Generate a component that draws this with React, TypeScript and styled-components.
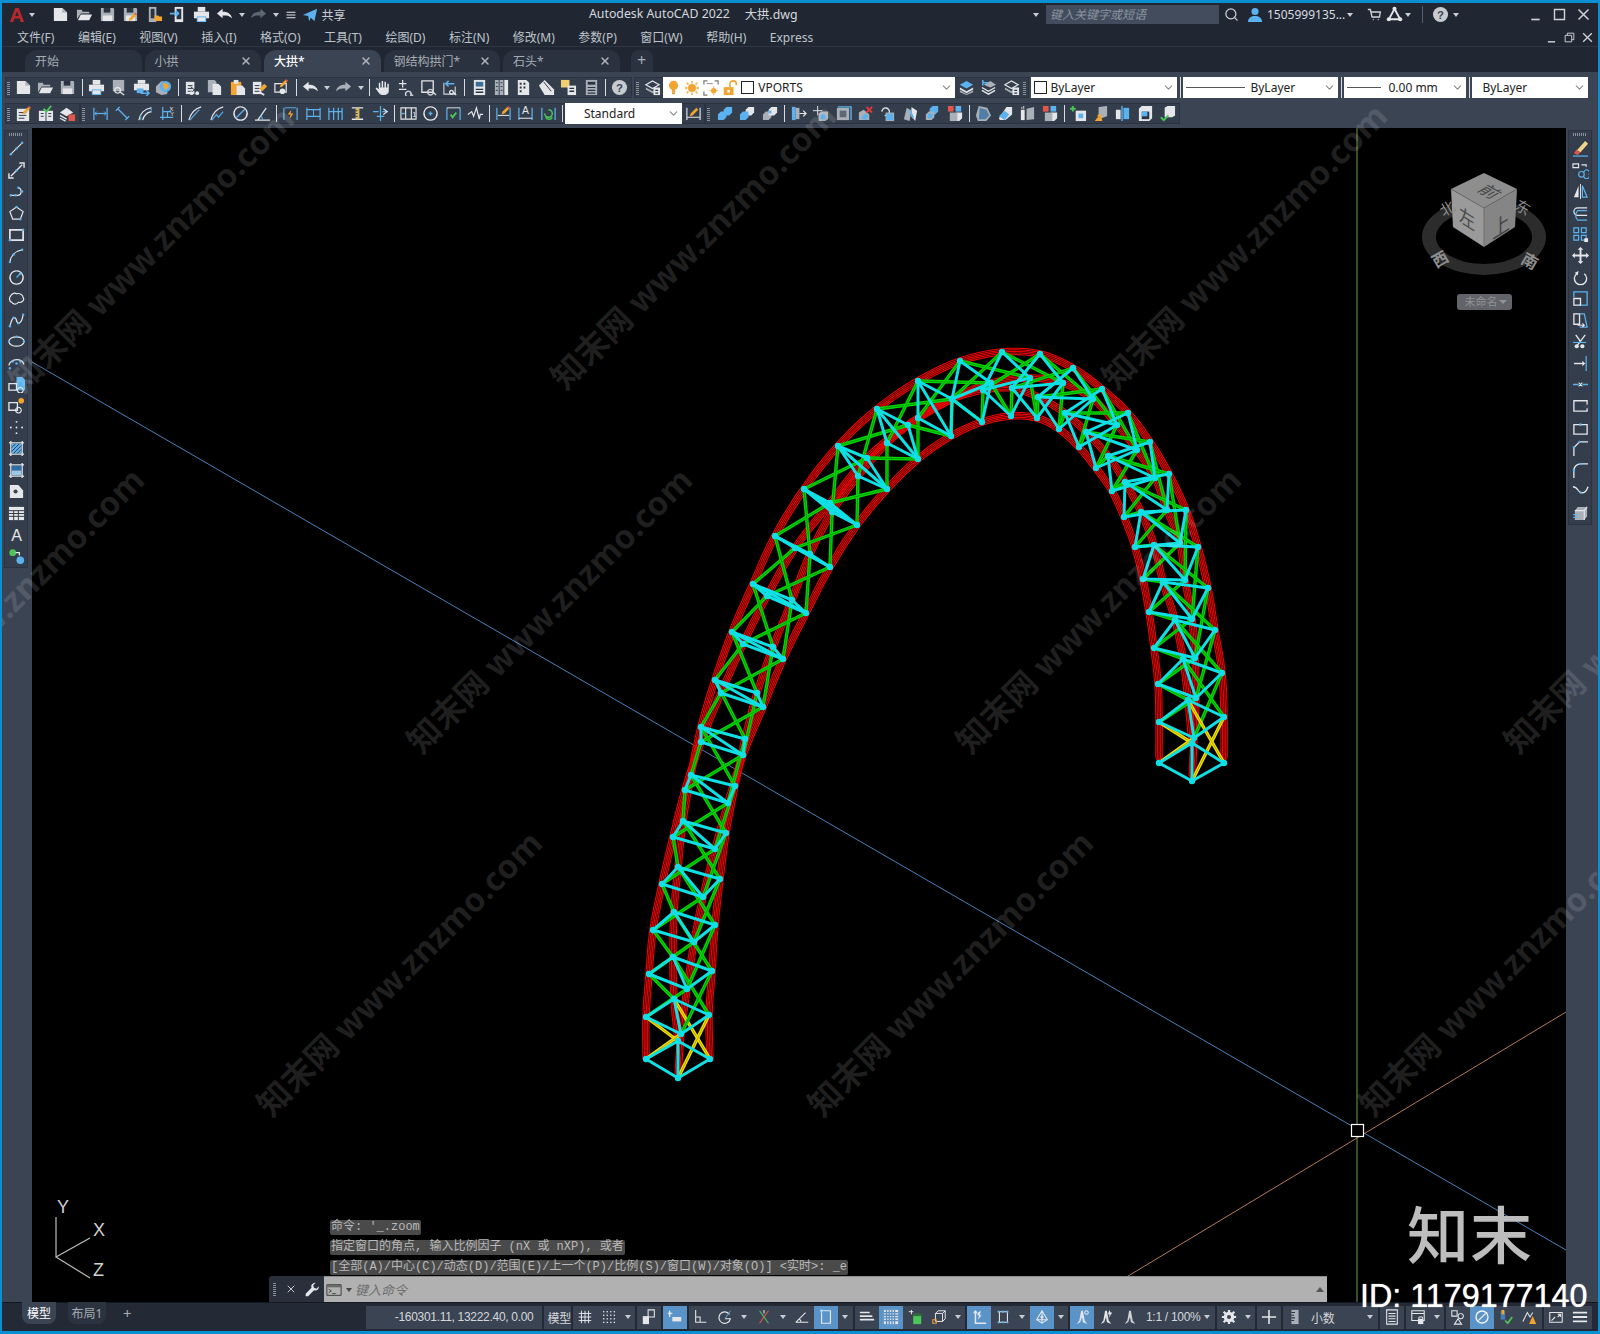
import React, { ReactNode } from 'react';
import styled, { createGlobalStyle } from 'styled-components';
import { ChevronDown, Search, X } from 'lucide-react';

const L = '#e4e6e9';
const M = '#aab0b8';
const B = '#5cb2ee';
const K = '#2b3340';
const O = '#f2a531';
const R = '#e2574c';
const G = '#4cc45a';
const S = '#cfd3d8';

const p = (d: string, c = L) => <path d={d} fill={c} />;
const s = (d: string, c = S, w = 1.3) => <path d={d} fill="none" stroke={c} strokeWidth={w} />;
const o = (x: number, y: number, c = B, r = 1.3) => <circle cx={x} cy={y} r={r} fill={c} />;
const hex = (x: number, y: number, c = B) => p(`M${x} ${y + 3}l3-3h6v6l-3 3h-6z`, c);
const pencil = (x: number, y: number) => <>{p(`M${x} ${y + 6}l5-5 2 2-5 5-3 1z`, O)}{p(`M${x + 5} ${y + 1}l1-1 2 2-1 1z`, R)}</>;
const floppy = <>{p('M2 2h13l1 1v13H2z', M)}{p('M5 2h7v5H5z', K)}{p('M4 10h10v6H4z', L)}</>;
const docs = <>{p('M2 3h9v13H2z', L)}{s('M4 7h5M4 10h5M4 13h5', K, 1)}</>;
const dimBar = s('M2 3v13M16 3v13', B, 1.3);

const glyphs: Record<string, ReactNode> = {
  logo: <>{p('M1 17L7 1h4l6 16h-4l-1-4H6l-1 4zM7 10h4L9 5z', '#b5282c')}</>,
  page: <>{p('M2 2h9l5 5v9H2z')}{p('M11 2l5 5h-5z', M)}</>,
  folder: <>{p('M1 14V4h5l1 2h7v2H5z', M)}{p('M5 9h12l-3 6H2z')}</>,
  save: floppy,
  saveas: <>{floppy}{pencil(8, 7)}</>,
  publish: <>{p('M3 1h8v16H3z', M)}{p('M5 3h4v10H5z', K)}{p('M9 10h4l1 1h3v5H9z', O)}</>,
  mobile: <>{p('M6 1h9v16H6z')}{p('M8 3h5v11H8z', K)}{s('M1 8h9M7 5l3 3-3 3', B, 1.8)}</>,
  print: <>{p('M5 1h8v5H5z')}{p('M1 6h16v7H1z')}{p('M4 11h10v6H4z', B)}{p('M5 12h8v4H5z')}</>,
  undo: <>{p('M1 8l6-5v3c5 0 9 2 10 7-3-3-6-3-10-3v3z')}</>,
  redo: <>{p('M17 8l-6-5v3C6 6 2 8 1 13c3-3 6-3 10-3v3z', M)}</>,
  redo2: <>{p('M17 8l-6-5v3C6 6 2 8 1 13c3-3 6-3 10-3v3z', '#5d6673')}</>,
  send: <>{p('M1 9L17 2l-3 14-4-4-2 4-1-6z', B)}</>,
  min: s('M4 15h10', S, 2),
  max: s('M3 3h12v12H3z', S, 1.7),
  close: s('M3 3l12 12M15 3L3 15', S, 1.8),
  restore: <>{s('M3 6h9v9H3zM6 6V3h9v9h-3', S, 1.3)}</>,
  user: <>{o(9, 5, B, 4)}{p('M1 17c0-5 4-7 8-7s8 2 8 7z', B)}</>,
  cart: s('M1 3h3l2 9h9l1-6H5M7 15h1M13 15h1', S, 1.6),
  a360: <>{s('M9 3L3 14h12z', L, 2)}{o(9, 3, L, 2.2)}{o(3, 14, L, 2.2)}{o(15, 14, L, 2.2)}</>,
  help: <>{o(9, 9, '#c7cbd0', 8)}<text x="9" y="13.5" textAnchor="middle" fontSize="12" fontWeight="700" fontFamily="Liberation Sans" fill="#3b4453">?</text></>,
  preview: <>{p('M3 1h12v12H3z', M)}{s('M8 9a3 3 0 1 0 .1 0M11 14l4 3', L, 1.5)}</>,
  plot: <>{p('M5 1h8v4H5z')}{p('M1 5h16v7H1z')}{p('M4 10h7v5H4z', B)}{s('M8 15h9M14 12l3 3-3 3', B, 1.5)}</>,
  globe: <>{p('M1 8l6-6 6 2v12l-6 1-6-3z', M)}{o(11, 8, B, 6)}{p('M8 5l4-1 3 4-4 4-2-3z', O)}</>,
  cut: <>{docs}{s('M7 8l8 7M15 8l-8 7', K, 1)}{o(8, 15, L, 2)}{o(14, 15, L, 2)}</>,
  copy: <>{p('M2 1h7l2 2v11H2z', M)}{p('M7 5h6l3 3v9H7z')}</>,
  paste: <>{p('M2 3h11v14H2z', O)}{p('M5 1h5v4H5z', L)}{p('M8 7h6l3 3v7H8z')}</>,
  match: <>{docs}{p('M9 10l5-5 3 3-5 5z', O)}{s('M9 14l5 3', L, 2)}</>,
  edit: <>{s('M2 5h12v9H2z', L, 1.3)}{o(10, 13, L, 3)}{pencil(8, 0)}</>,
  hand: <>{p('M4 10V4h1.6v5H7V2h1.6v7H10V3h1.6v6H13V5h1.6v8c0 2-2 4-5 4s-5-1-6-3l-3-4 1-1 3 2z')}</>,
  zoomr: <>{s('M2 5h8M6 1v8M2 11h8', L, 1.3)}{s('M12 13a3 3 0 1 0 .1 0M14 15l3 3', S, 1.5)}</>,
  zoomw: <>{s('M2 2h12v12H2z', L, 1.4)}{s('M11 11a3 3 0 1 0 .1 0M13 13l4 4', S, 1.5)}</>,
  zoomp: <>{s('M2 4v12h12V8', S, 1.2)}{s('M4 5h9M7 2L4 5l3 3', B, 1.6)}{s('M10 12a2 2 0 1 0 .1 0M12 14l3 3', L, 1.4)}</>,
  props: <>{p('M3 1h12v16H3z')}{p('M5 3h8v5H5z', '#3c6e9a')}{s('M5 11h8M5 14h8', K, 1.5)}</>,
  design: <>{p('M2 1h4v16H2zM7 1h4v16H7z', M)}{p('M12 1h4v16h-4z')}{s('M3 4h2M3 8h2M3 12h2M8 4h2M8 8h2M8 12h2', K, 1)}</>,
  palette: <>{p('M3 1h9l3 3v13H3z')}{p('M5 4h2v2H5zM9 4h2v2H9zM5 8h2v2H5zM9 8h2v2H9zM5 12h2v2H5z', K)}</>,
  sheet: <>{p('M1 7l6-6 10 10v6H7z')}{s('M6 3l8 10', K, 1)}</>,
  markup: <>{p('M1 1h9v8H1z', '#f0d070')}{p('M8 7h9v10H8z')}{s('M10 10h5M10 13h5', K, 1.4)}</>,
  calc: <>{p('M3 1h12v16H3z', M)}{p('M5 3h8v3H5z', K)}{s('M5 9h8M5 12h8M5 15h8', K, 1.3)}</>,
  layerbox: <>{s('M2 6l7-4 7 4-7 4z', L, 1.3)}{p('M2 9l7 4 7-4v2l-7 4-7-4z', M)}{p('M10 9h7v8h-7z')}{s('M12 12h3M12 15h3', K, 1.2)}</>,
  layer1: <>{p('M2 6l7-4 7 4-7 4z', B)}{p('M2 9l7 4 7-4v2l-7 4-7-4z')}{p('M2 12l7 4 7-4v2l-7 3-7-3z', M)}</>,
  layer2: <>{s('M2 9l7 4 7-4M2 12l7 4 7-4', L, 1.5)}{p('M4 6l7-4 6 4-6 3z', M)}{s('M3 4h6M3 1v6', B, 1.6)}</>,
  bulb: <>{o(9, 6.5, O, 5.5)}{p('M7 11h4v4H7z', O)}{p('M7.5 15h3v2h-3z', '#c98a20')}</>,
  sun: <>{o(9, 9, O, 4.5)}{s('M9 1v3M9 14v3M1 9h3M14 9h3M3 3l2 2M13 13l2 2M15 3l-2 2M5 13l-2 2', O, 1.5)}</>,
  frame: <>{s('M1 5V1h4M13 1h4v4M1 13v4h4', '#7a7a7a', 1.4)}{s('M4 4h7', '#888', 1)}{o(12, 12, O, 3)}{s('M12 7v2M12 15v2M7 12h2M15 12h2', O, 1)}</>,
  lock: <>{p('M2 8h11v9H2z', O)}{s('M9 8V4c0-4 7-4 7 0v2', O, 1.8)}{p('M6 11h3v3H6z', '#fff')}</>,
  note: <>{p('M2 4h13v13H2z')}{s('M4 8h8M4 11h8M4 14h6', K, 1)}{pencil(9, 1)}</>,
  book: <>{p('M2 6h7v11H2zM10 6h7v11h-7z')}{s('M4 9h3M4 12h3M12 9h3M12 12h3', K, 1)}{s('M7 4l3 3 5-6', G, 2)}</>,
  stack: <>{p('M1 8l7-5 7 5-7 4z', L)}{s('M1 11l7 4M1 14l6 3', L, 1.4)}{p('M10 10h7v7h-7z', R)}</>,
  dlin: <>{dimBar}{s('M3 9h12', B, 1.3)}{s('M5 7l-2 2 2 2M13 7l2 2-2 2', B, 1)}</>,
  dali: <>{s('M2 6l4-4M12 16l4-4M4 4l10 10', B, 1.4)}</>,
  darc: <>{s('M2 16C3 9 8 4 15 3M6 16C7 12 10 8 15 7', L, 1.3)}{s('M4 16V11M15 2v6', B, 1)}</>,
  dord: <>{s('M4 2v14M1 13h14M9 13V7M4 7h9', B, 1.3)}<text x="11" y="6" fontSize="6" fontFamily="Liberation Sans" fill={L}>X</text><text x="12" y="12" fontSize="6" fontFamily="Liberation Sans" fill={L}>Y</text></>,
  drad: <>{s('M2 16C4 8 8 4 15 2', L, 1.3)}{s('M3 16L13 5', B, 1.2)}</>,
  djog: <>{s('M2 16C4 8 8 4 15 2', L, 1.3)}{s('M3 16l5-6 2 3 5-6', B, 1.2)}</>,
  ddia: <>{s('M9 2a7 7 0 1 0 .1 0', L, 1.4)}{s('M4 14L14 4', B, 1.3)}</>,
  dang: <>{s('M1 16h16M4 16L13 3', L, 1.3)}{s('M9 16c0-3-1-4-2-5', B, 1.2)}</>,
  dfast: <>{dimBar}{s('M3 3h12', B, 1)}{p('M10 5L6 10h3l-1 5 4-6H9z', O)}</>,
  dbase: <>{dimBar}{s('M2 5h14M2 12h14', B, 1.3)}{s('M9 5v7', B, 1)}</>,
  dcont: <>{s('M2 3v13M7 3v13M12 3v13M16 3v13M2 7h14', B, 1.3)}</>,
  dspace: <>{s('M3 3h12M3 15h12', L, 1.5)}{p('M7 3h4v12H7z', '#d8b860')}{s('M7 6h2M7 9h2M7 12h2', K, 1)}</>,
  dbreak: <>{s('M9 1v16M1 7h6M11 7h6M5 12h8', B, 1.3)}{s('M12 4l4 3-4 3', L, 1.2)}</>,
  dtol: <>{s('M1 3h16v12H1zM6 3v12M12 3v12', L, 1.2)}<text x="13" y="13" fontSize="8" fontFamily="Liberation Sans" fill={L}>1</text>{s('M2 9h3', B, 1.5)}</>,
  dcen: <>{s('M9 2a7 7 0 1 0 .1 0', L, 1.3)}{s('M7 9h4M9 7v4', B, 1.4)}</>,
  dinsp: <>{dimBar}{s('M2 3h14', L, 1)}{s('M6 10l2 3 4-5', G, 2)}</>,
  dwave: <>{s('M1 10l4-3 2 5 3-9 3 12 1-5h3', L, 1.3)}</>,
  dedit: <>{dimBar}{s('M3 11h12', L, 1.1)}{pencil(8, 1)}</>,
  dtext: <>{dimBar}{s('M2 14h14', L, 1.1)}<text x="9" y="10" textAnchor="middle" fontSize="11" fontFamily="Liberation Sans" fill={L}>A</text></>,
  dupd: <>{dimBar}{s('M9 5a4 4 0 1 1-4 4M13 13a4 4 0 0 1-7 0', G, 1.6)}</>,
  dstyle: <>{s('M2 3v13M16 3v13M2 13h14', L, 1.2)}{p('M6 9l6-6 2 2-6 6-3 1z', O)}</>,
  union: <>{hex(1, 7)}{hex(7, 2)}</>,
  subtr: <>{hex(7, 2, L)}{hex(1, 7)}</>,
  inter: <>{hex(1, 7, M)}{hex(7, 2, L)}{p('M7 9h3v-3h-3z', B)}</>,
  extr: <>{p('M2 2h4v14H2z', B)}{p('M6 3h4v12H6z', M)}{s('M10 9h7M14 6l3 3-3 3', L, 1.3)}</>,
  movef: <>{s('M6 1v10M1 6h10', L, 1)}{p('M7 9l3-2h7v8l-3 2H7z', M)}{p('M9 10h5v5H9z', B)}</>,
  offf: <>{p('M2 3h13v13H2z', M)}{s('M3 2h14v14', B, 1.5)}{p('M5 6h7v7H5z', '#5f6875')}</>,
  delf: <>{p('M2 16V8l5-3 6 5v6z', M)}{p('M4 14l5-5 3 3-2 4z', B)}{s('M10 2l6 6M16 2l-6 6', '#e23b3b', 2)}</>,
  rotf: <>{s('M3 7a4 4 0 1 1 3 4', L, 1.4)}{p('M7 8h9v9H7z', M)}{p('M8 9h7v7H8z', B)}</>,
  taper: <>{p('M2 15L5 3l5 3-2 11z', M)}{p('M10 2l6 4-2 11-4-5z', L)}{s('M8 5l4 9', B, 2)}</>,
  copyf: <>{hex(6, 1, B)}{hex(2, 7, M)}{p('M4 9h5v5H4z', B)}</>,
  colorf: <>{p('M1 1h6v6H1z', R)}{p('M9 1h6v6H9z', B)}{hex(7, 8, L)}{p('M3 8h8v9H3z', M)}</>,
  shell: <>{p('M4 1l9 2 4 8-5 6H3l-2-6z', M)}{p('M5 3l7 2 3 6-4 4H4z', '#4f7ea8')}</>,
  clean: <>{p('M2 14L10 2h6v8l-7 6H3z', L)}{p('M2 12l6-6 5 4-5 6z', B)}</>,
  sep3: <>{p('M2 5h4v11H2z', L)}{p('M8 4l8-2v13l-8 1z', M)}{s('M3 2v2M5 1v3', L, 1)}</>,
  addf: <>{s('M3 1v6M0 4h6', G, 2)}{p('M6 6h11v11H6z', L)}{p('M9 9h5v5H9z', B)}</>,
  brush: <>{p('M7 2l9-1v11l-6 2-3-2z', M)}{p('M6 10h4v3H6z', O)}{p('M3 17l3-4h4l1 4z', O)}</>,
  slice: <>{p('M2 5h5v10H2z', L)}{p('M10 3h6v12h-6z', B)}{s('M8.5 1v16', B, 1.5)}</>,
  boxv: <>{p('M2 4l3-3h11v13l-3 3H2z', L)}{p('M5 7h8v8H5z', K)}{p('M5 7h6v5H5z', B)}</>,
  checkb: <>{p('M6 3l3-2h8v10l-3 2H6z', L)}{s('M2 13l3 3 5-5', G, 2)}</>,
  line: <>{s('M3 15L15 3', L, 1.2)}{o(3, 15)}{o(9, 9)}{o(15, 3)}</>,
  xline: <>{s('M3 15L15 3', L, 1.4)}{s('M1 12v5h5M17 6V1h-5', L, 1.5)}{o(9, 9)}</>,
  pline: <>{s('M3 13h7c5 0 5-7 1-8', L, 1.3)}{o(3, 13)}{o(8, 13)}{o(15, 9)}{o(11, 5)}</>,
  polygon: <>{s('M9 2l7 5-3 8H5L2 7z', L, 1.3)}{o(9, 2)}{o(13, 15)}</>,
  rect: <>{s('M2 4h14v11H2z', L, 1.8)}{o(16, 4)}{o(2, 15)}</>,
  arc: <>{s('M2 16C3 9 8 4 15 3', L, 1.3)}{o(2, 16)}{o(6, 8)}{o(15, 3)}</>,
  circle: <>{s('M9 2a7 7 0 1 0 .1 0', L, 1.3)}{s('M9 9l4-4', B, 1.3)}{o(13, 5)}</>,
  cloud: s('M3 6c1-3 5-3 6-2 3-1 7 1 7 4 2 3-2 6-5 5-2 3-6 2-7 0C1 12 1 8 3 6z', L, 1.3),
  spline: <>{s('M2 15C5 3 8 5 9 9s5 5 7-6', L, 1.3)}{o(2, 15)}{o(6, 6)}{o(11, 12)}{o(16, 3)}</>,
  ellipse: <>{s('M9 4c4 0 8 2 8 5s-4 5-8 5-8-2-8-5 4-5 8-5z', L, 1.3)}{o(9, 4)}{o(17, 9)}{o(1, 9)}</>,
  earc: <>{s('M1 11c0-3 4-6 8-6s7 2 8 5', L, 1.3)}{o(5, 7)}{o(9, 9)}{o(13, 7)}{o(2, 14)}</>,
  insert: <>{p('M9 1h6l3 3v11H9z', B)}{s('M1 8h8v7H1z', L, 1.4)}{s('M13 12a3 3 0 1 0 .1 0', L, 1.2)}</>,
  block: <>{s('M1 6h9v8H1z', L, 1.4)}{s('M11 11a3 3 0 1 0 .1 0', L, 1.2)}{o(14, 4, O, 3)}</>,
  points: <>{o(9, 3, L, 1)}{o(3, 9, L, 1)}{o(15, 9, L, 1)}{o(9, 15, L, 1)}{o(9, 9, L, 1)}</>,
  hatch: <>{s('M3 1v16M15 1v16M1 3h16M1 15h16', L, 1.4)}{p('M4 4h10v10H4z', B)}{s('M4 8l4-4M4 12l8-8M6 14l8-8M10 14l4-4', K, 1)}</>,
  grad: <>{s('M3 1v16M15 1v16M1 3h16M1 15h16', L, 1.4)}{p('M4 4h10v5H4z', '#2d6ea8')}{p('M4 9h10v5H4z', '#9cc8ea')}</>,
  region: <>{p('M2 2h9l5 6v8H2z')}{o(8, 9, '#3b4453', 2.2)}</>,
  table: <>{p('M1 2h16v14H1z')}{s('M1 6h16M1 9h16M1 12h16M6 6v10M11 6v10', K, 1)}</>,
  textA: <text x="9" y="16" textAnchor="middle" fontSize="17" fontFamily="Liberation Sans" fill={L}>A</text>,
  addsel: <>{o(5, 5, G, 3.6)}{o(13, 13, B, 4)}{s('M8 5h4v3', L, 1.3)}</>,
  erase: <>{p('M5 11L14 1l3 3-8 9z', '#f1d58c')}{p('M2 14l3-4 4 3-3 3z', R)}{s('M1 17h16', B, 1.3)}</>,
  copyobj: <>{s('M1 2h6v4H1z', L, 1.2)}{s('M10 3h5v2', L, 1.3)}{s('M7 13a3 3 0 1 0 6 0 3 3 0 1 0-6 0M13 13a3 3 0 1 0 5 0 3 3 0 1 0-5 0', B, 1.2)}</>,
  mirror: <>{p('M7 3v12H2z', L)}{s('M9 1v16', L, 1)}{s('M11 3v12h5z', B, 1.3)}</>,
  offset: <>{s('M16 3H6a4 4 0 0 0 0 8h10', L, 1.3)}{s('M16 6H6a7 7 0 0 0 0 10h10', B, 1.3)}</>,
  array: <>{s('M2 2h5v5H2zM10 2h5v5h-5zM2 10h5v5H2zM10 10h5v5h-5z', B, 1.3)}{p('M13 13h4v4h-4z', L)}</>,
  move: <>{s('M9 2v14M2 9h14', L, 2)}{p('M9 0l3 3H6zM9 18l-3-3h6zM0 9l3-3v6zM18 9l-3 3V6z')}</>,
  rotate: <>{s('M13 5a6.5 6.5 0 1 1-8 0', L, 1.4)}{p('M7 2l-1 5-3-3z')}</>,
  scale: <>{s('M2 8V2h14v14H8', B, 1.4)}{s('M2 9h7v7H2z', L, 1.4)}</>,
  stretch: <>{s('M2 2h6v11H2z', L, 1.4)}{s('M8 2h5l3 14H8', B, 1.3)}{s('M6 14h7M11 12l2 2-2 2', L, 1.2)}</>,
  trim: <>{s('M5 14L14 2M4 2l5 7', L, 1.4)}{o(5, 14, L, 2.2)}{o(11, 14, L, 2.2)}{s('M1 10h14', B, 1.2)}</>,
  extend: <>{s('M2 9h10', L, 1.5)}{s('M15 1v16', B, 1.3)}{p('M11 6l3 3-3 3z')}</>,
  brkp: <>{s('M1 9h6M11 9h6', B, 1.5)}{s('M7 7l2 2-2 2M11 7L9 9l2 2', L, 1.1)}</>,
  brk: <>{s('M2 4h14v11H2z', L, 1.4)}{p('M12 8h6v4h-6z', '#3b4453')}</>,
  join: <>{s('M2 6h14v10H2z', L, 1.4)}{s('M8 6h2', B, 3)}</>,
  chamfer: <>{s('M2 17V8l6-6h9', L, 1.4)}{o(8, 2, B)}{o(2, 8, B)}</>,
  fillet: <>{s('M2 17V9c0-4 3-7 7-7h8', L, 1.4)}{o(9, 2, B)}{o(2, 9, B)}</>,
  blend: <>{s('M1 4c5 0 5 5 8 6s6 0 8-6', L, 1.4)}{o(9, 10, B)}</>,
  explode: <>{p('M3 6l3-4h10v10l-3 4H3z', M)}{s('M3 6h10v10M13 6l3-4', L, 1.2)}{s('M1 10h5M1 13h5', B, 1.2)}</>,
  grid: s('M5 2v14M9 2v14M13 2v14M2 5h14M2 9h14M2 13h14', L, 1.1),
  snap: <>{[3, 7, 11, 15].map(y => [3, 7, 11, 15].map(x => <rect key={x + '-' + y} x={x - .7} y={y - .7} width="1.5" height="1.5" fill={L} />))}</>,
  tile: <>{p('M2 8h7v9H2z')}{s('M8 1h7v8H8z', L, 1.2)}</>,
  infer: <>{s('M3 2v7', L, 1.5)}{p('M6 9h10v5H6z')}{s('M1 5h5', L, 1.5)}</>,
  ortho: s('M3 1v14h12M3 9h5v6', L, 1.2),
  polar: <>{s('M14 6a6.5 6.5 0 1 0 1 5H9', L, 1.3)}{s('M9 11l6-9', B, 1)}</>,
  isnap: <>{s('M4 2l10 14', G, 1.2)}{s('M14 2L4 16', R, 1.2)}{s('M9 1v4', L, 1.2)}</>,
  ang: s('M2 15h14M2 15L13 4M8 15c0-2-1-3-2-4', L, 1.2),
  dyn: <>{s('M4 2h10v14H4z', L, 1.3)}{p('M2 0h4v4H2z', B)}{p('M3 1h2v2H3z')}</>,
  lw: s('M1 4h11M1 8h14M1 12h16', L, 1.8),
  trans: <>{p('M1 1h16v16H1z')}{s('M4 1v16M7 1v16M10 1v16M13 1v16M1 4h16M1 7h16M1 10h16M1 13h16', '#5b8fc0', 1.5)}</>,
  selc: <>{s('M5 1v5M2 3h5', L, 1.1)}{p('M7 7h9v10H7z', G)}{p('M7 5h9v3H7z', '#2f6d3a')}</>,
  box3d: <>{s('M5 5l3-3h8v9l-3 3H5zM5 5h8v9M13 5l3-3', L, 1.1)}{s('M2 12h4v4H2z', O, 1.2)}</>,
  ucs: <>{s('M5 2v14h12', L, 1.7)}{s('M5 2L3 5M5 2l2 3', L, 1.3)}{p('M8 4l3-2-1 5 2 0-4 5 1-5H7z')}</>,
  gizmo: <>{s('M5 3h9v12H5z', L, 1.2)}{o(4, 3)}{o(14, 3)}{o(4, 15)}{o(14, 15)}{o(9, 3)}{o(9, 15)}</>,
  threeD: <>{s('M9 2l6 10H3zM3 12l6 4 6-4M9 2v14', L, 1.2)}{o(9, 9, L, 1.8)}</>,
  annoV: <>{p('M8 2h2l2 11 3 4-5-2-1-6-2 6-4 2 3-4z')}{s('M14 2a2 2 0 1 0 .1 0', L, 1.2)}</>,
  annoA: <>{p('M8 2h2l2 11 3 4-5-2-1-6-2 6-4 2 3-4z')}{p('M13 1l-2 5h2l-1 4 4-6h-2z')}</>,
  annoS: <>{p('M8 2h2l2 11 3 4-5-2-1-6-2 6-4 2 3-4z', S)}</>,
  gear: <>{o(9, 9, L, 6)}{s('M9 1v16M1 9h16M3 3l12 12M15 3L3 15', L, 2.5)}{o(9, 9, '#3b4453', 2.3)}</>,
  plus: s('M9 1v16M1 9h16', L, 1.8),
  ruler: <>{p('M5 1h8v16H5z', M)}{s('M5 4h4M5 7h3M5 10h4M5 13h3', K, 1.2)}</>,
  calcS: <>{s('M3 1h12v16H3z', L, 1.2)}{s('M5 5h8M5 8h8M5 11h8M5 14h8', L, 1.2)}</>,
  lockw: <>{s('M2 2h14v11H2zM2 5h14', L, 1.2)}{p('M9 11h6v6H9z')}{s('M10 11V9h4v2', L, 1.1)}</>,
  isol: <>{s('M2 2h6v6H2z', L, 1.2)}{s('M12 5a3 3 0 1 0 .1 0', L, 1.2)}{s('M9 11l4 6H5z', L, 1.2)}</>,
  hw: <>{o(9, 9, '#f1f5f9', 7.5)}{o(9, 9, '#5c93c6', 6)}{s('M5 13L13 5', L, 1.4)}</>,
  qprop: <>{p('M3 2h5v10H3z', '#3f7fb6')}{p('M4 1h3v5H4z', O)}{s('M8 13l3 3 5-7', G, 2)}</>,
  warn: <>{s('M1 14L6 4l3 5 3-5', L, 1.2)}{p('M8 17l4-9 4 9z', O)}</>,
  full: <>{s('M2 4h14v11H2z', L, 1.2)}{s('M4 13l4-4M11 9l3-3M11 6h3v3', L, 1.2)}</>,
  menu: s('M1 4h16M1 9h16M1 14h16', L, 2),
  wrench: <>{p('M14 1l-3 3 1 3 3 1 3-3c0 4-3 6-6 5L5 17H2v-3l7-7c-1-3 1-6 5-6z')}</>,
  cmd: <>{s('M1 3h16v12H1z', '#3f3f3f', 1.1)}{p('M1 3h16v3H1z', '#6a6a6a')}{s('M3 8l3 2-3 2M7 13h4', '#3f3f3f', 1)}</>,
};

// nodes of each truss section, left foot to right foot: [outer, a, inner, b]
const sections: number[][][] = [
  [[646, 1059], [678, 1041], [710, 1059], [678, 1078]],
  [[646, 1017], [674, 999], [709, 1015], [681, 1034]],
  [[649, 974], [673, 957], [712, 971], [687, 989]],
  [[653, 930], [674, 912], [715, 925], [694, 942]],
  [[662, 884], [678, 867], [720, 879], [703, 897]],
  [[673, 837], [683, 821], [726, 833], [715, 849]],
  [[685, 790], [691, 775], [735, 786], [728, 803]],
  [[701, 742], [701, 727], [745, 739], [743, 755]],
  [[721, 693], [715, 680], [757, 693], [763, 707]],
  [[743, 644], [732, 632], [773, 647], [783, 659]],
  [[767, 596], [753, 584], [792, 600], [806, 613]],
  [[795, 548], [775, 536], [810, 554], [830, 567]],
  [[830, 503], [804, 489], [832, 512], [857, 525]],
  [[867, 458], [838, 446], [858, 476], [887, 489]],
  [[908, 425], [877, 409], [887, 443], [918, 459]],
  [[952, 399], [918, 381], [918, 418], [951, 436]],
  [[991, 383], [960, 361], [952, 399], [982, 422]],
  [[1030, 378], [1002, 352], [983, 390], [1011, 416]],
  [[1063, 383], [1040, 354], [1012, 388], [1037, 418]],
  [[1093, 399], [1073, 368], [1038, 397], [1059, 429]],
  [[1117, 425], [1102, 389], [1065, 413], [1079, 447]],
  [[1137, 450], [1128, 413], [1086, 432], [1096, 468]],
  [[1155, 478], [1150, 442], [1108, 456], [1112, 491]],
  [[1167, 510], [1169, 474], [1125, 482], [1124, 517]],
  [[1180, 543], [1186, 510], [1141, 512], [1135, 547]],
  [[1185, 580], [1198, 547], [1154, 545], [1143, 579]],
  [[1192, 619], [1208, 588], [1163, 582], [1149, 612]],
  [[1195, 658], [1215, 630], [1175, 620], [1154, 648]],
  [[1196, 698], [1222, 673], [1183, 659], [1158, 684]],
  [[1194, 738], [1224, 717], [1188, 700], [1159, 722]],
  [[1192, 781], [1224, 763], [1192, 743], [1159, 763]],
];

// catmull-rom through the nodes, then a polyline shifted sideways by off
const chordPath = (pts: number[][], off: number) => {
  const out: number[][] = [];
  for (let i = 0; i < pts.length - 1; i++) {
    const a = pts[Math.max(i - 1, 0)], b = pts[i], c = pts[i + 1], d = pts[Math.min(i + 2, pts.length - 1)];
    for (let t = 0; t < 1; t += 0.2) {
      const f = (k: number) => 0.5 * (2 * b[k] + (c[k] - a[k]) * t + (2 * a[k] - 5 * b[k] + 4 * c[k] - d[k]) * t * t + (3 * b[k] - a[k] - 3 * c[k] + d[k]) * t * t * t);
      const dx = c[0] - b[0], dy = c[1] - b[1], n = Math.hypot(dx, dy);
      out.push([f(0) - dy / n * off, f(1) + dx / n * off]);
    }
  }
  out.push(pts[pts.length - 1]);
  return 'M' + out.map(q => q[0].toFixed(1) + ' ' + q[1].toFixed(1)).join('L');
};

const Arch = () => {
  const bays = sections.slice(0, -1).map((low, i) => [0, 1, 2, 3].map(k => ({
    from: sections[i + 1][k], to: low[(k + 1) % 4], end: i === 0 || i === sections.length - 2,
  }))).flat();
  return (
    <g>
      {[0, 1, 2, 3].map(k => [-3.2, -1.6, 0, 1.6, 3.2].map(off => (
        <path key={k + '' + off} d={chordPath(sections.map(q => q[k]), off)} fill="none" stroke="#f00000" strokeWidth="1.1" />
      )))}
      {bays.map((b, i) => (
        <g key={i}>
          <line x1={b.from[0]} y1={b.from[1]} x2={b.to[0]} y2={b.to[1]} stroke={b.end ? '#f2e000' : '#00d800'} strokeWidth="3.4" />
          <line x1={b.from[0]} y1={b.from[1]} x2={b.to[0]} y2={b.to[1]} stroke={b.end ? '#8a8000' : '#007a00'} strokeWidth=".6" />
        </g>
      ))}
      {sections.map((q, i) => {
        const bar = i <= 15 ? [q[1], q[3]] : [q[0], q[2]];
        return (
          <g key={i}>
            <path d={'M' + q.map(n => n.join(' ')).join('L') + 'Z'} fill="none" stroke="#0fe0e6" strokeWidth="3" strokeLinejoin="round" />
            <line x1={bar[0][0]} y1={bar[0][1]} x2={bar[1][0]} y2={bar[1][1]} stroke="#0fe0e6" strokeWidth="3" />
            {q.map((n, j) => <circle key={j} cx={n[0]} cy={n[1]} r="3.2" fill="#0fe0e6" />)}
          </g>
        );
      })}
    </g>
  );
};

const ViewCube = () => (
  <g fontFamily="'Noto Sans CJK SC', sans-serif">
    <path fillRule="evenodd" d="M1422 237a62 38 0 1 0 124 0a62 38 0 1 0-124 0zM1436 237a48 27 0 1 1 96 0a48 27 0 1 1-96 0z" fill="#2c2c2c" />
    <path d="M1484 173l33 16-33 19-33-19z" fill="#8e8e8e" />
    <path d="M1451 189l33 19v39l-31-20z" fill="#9a9a9a" />
    <path d="M1517 189l-33 19v39l31-20z" fill="#858585" />
    <path d="M1451 189l33 19 33-19M1484 208v39" fill="none" stroke="#666" strokeWidth=".8" />
    <text transform="matrix(.8 .45 -.8 .45 1484 195)" textAnchor="middle" fontSize="20" fill="#4a4a4a">前</text>
    <text transform="matrix(.8 .5 0 1 1467 226)" textAnchor="middle" fontSize="20" fill="#4a4a4a">左</text>
    <text transform="matrix(.8 -.5 0 1 1501 234)" textAnchor="middle" fontSize="22" fill="#444">上</text>
    <text x="1447" y="214" textAnchor="middle" fontSize="15" fill="#8e8e8e" transform="rotate(-30 1447 208)">北</text>
    <text x="1523" y="213" textAnchor="middle" fontSize="15" fill="#8e8e8e" transform="rotate(30 1523 207)">东</text>
    <text x="1440" y="265" textAnchor="middle" fontSize="16" fontWeight="700" fill="#8e8e8e" transform="rotate(-30 1440 259)">西</text>
    <text x="1530" y="267" textAnchor="middle" fontSize="16" fontWeight="700" fill="#8e8e8e" transform="rotate(30 1530 261)">南</text>
    <rect x="1457" y="294" width="55" height="16" rx="3" fill="#62646a" />
    <text x="1481" y="306" textAnchor="middle" fontSize="11" fill="#8f9196">未命名</text>
    <path d="M1499 300h8l-4 4z" fill="#8f9196" />
  </g>
);

const GlobalStyle = createGlobalStyle`
  html, body { margin: 0; padding: 0; background: #000; }
  * { box-sizing: border-box; }
`;

const Window = styled.div`
  position: relative;
  width: 1600px;
  height: 1334px;
  display: flex;
  flex-direction: column;
  overflow: hidden;
  background: #202733;
  border: solid #0b8fd3;
  border-width: 3px 2px 3px 2px;
  color: #c9cdd3;
  font: 12px "Noto Sans", "Noto Sans CJK SC", sans-serif;
`;

const TitleBar = styled.div`
  height: 23px;
  display: flex;
  align-items: center;
`;

const TitleText = styled.div`
  flex: 1;
  display: flex;
  gap: 15px;
  margin-top: -2px;
  font-size: 12.3px;
  color: #d6d9dd;
`;

const TitleTools = styled.div`
  display: flex;
  align-items: center;
  height: 100%;
  padding-right: 3px;
`;

const Space = styled.div<{ $w: number }>`
  width: ${p => p.$w}px;
  flex: none;
`;

const SearchBox = styled.div`
  width: 173px;
  height: 19px;
  margin: 0 5px 0 5px;
  padding-left: 4px;
  background: #424c5c;
  color: #8b94a1;
  font-style: italic;
  line-height: 19px;
`;

const UserName = styled.span`
  margin-left: 4px;
  width: 78px;
  color: #d9dce0;
  font-size: 12px;
`;

const TitleSep = styled.div`
  width: 1px;
  height: 17px;
  margin: 0 9px;
  background: #566070;
`;

const WinBtn = styled.div`
  width: 24px;
  height: 20px;
  display: flex;
  align-items: center;
  justify-content: center;
`;

const MenuBar = styled.div`
  height: 21px;
  display: flex;
  align-items: center;
  gap: 23.5px;
  padding: 2px 2px 0 15px;
  border-bottom: 1px solid #2d3542;
`;

const MenuItem = styled.span`
  color: #bfc4ca;
  white-space: nowrap;
`;

const MenuTools = styled.div`
  margin-left: auto;
  display: flex;
  align-items: center;
`;

const MdiBtn = styled.div`
  width: 18px;
  display: flex;
  justify-content: center;
`;

const TabBar = styled.div`
  height: 25px;
  padding: 3px 0 0 23px;
  display: flex;
  gap: 3px;
  align-items: stretch;
`;

const Tab = styled.div<{ $active?: boolean }>`
  width: 116.5px;
  padding: 0 9px 0 10px;
  display: flex;
  align-items: center;
  justify-content: space-between;
  background: ${p => (p.$active ? '#3b4453' : '#2a323f')};
  color: ${p => (p.$active ? '#fff' : '#a6acb4')};
  border-radius: 12px 10px 0 0;
  font-weight: ${p => (p.$active ? 500 : 400)};
`;

const AddTab = styled.div`
  width: 22px;
  margin-left: 8px;
  background: #2a323f;
  border-radius: 8px 8px 0 0;
  text-align: center;
  font-size: 16px;
  line-height: 21px;
  color: #a6acb4;
`;

const Toolbars = styled.div`
  height: 56px;
  padding: 5px 0 0 3px;
  display: flex;
  flex-direction: column;
  gap: 5px;
  background: #3b4453;
`;

const Row = styled.div`
  height: 21px;
  display: flex;
  align-items: stretch;
`;

const Group = styled.div<{ $ml?: number }>`
  display: flex;
  align-items: center;
  margin-left: ${p => p.$ml ?? 0}px;
  border: 1px solid #2c3340;
  background: #343d4b;
`;

const Handle = styled.div<{ $wide?: boolean }>`
  width: ${p => (p.$wide ? 8 : 6)}px;
  height: 14px;
  flex: none;
  background: repeating-linear-gradient(0deg, #8a919b 0 1px, transparent 1px 2px);
  background-size: 3px 100%;
  background-repeat: no-repeat;
  background-position: 1px 0;
`;

const Divider = styled.div<{ $w: number }>`
  width: ${p => p.$w}px;
  height: 17px;
  flex: none;
  display: flex;
  justify-content: center;
  &::after { content: ''; width: 1px; height: 100%; background: #d8dbdf; }
`;

const ToolBtn = styled.div`
  width: 22.4px;
  height: 100%;
  flex: none;
  display: flex;
  align-items: center;
  justify-content: center;
`;

const Qat = styled.div`
  width: 587px;
  display: flex;
  align-items: center;
  padding-left: 7px;
  ${ToolBtn} { width: 23.4px; }
`;

const QatBtn = styled(ToolBtn)<{ $w: number }>`
  && { width: ${p => p.$w}px; }
`;

const QatLabel = styled.span`
  margin-left: 2px;
`;

const Caret = styled.div<{ $w?: number; $c?: string }>`
  width: ${p => p.$w ?? 11}px;
  flex: none;
  display: flex;
  justify-content: center;
  &::after {
    content: '';
    border: 3px solid transparent;
    border-top: 4px solid ${p => p.$c ?? '#c9cdd3'};
    border-bottom: 0;
  }
`;

const Combo = styled.div<{ $w: number; $ml?: number }>`
  width: ${p => p.$w}px;
  margin-left: ${p => p.$ml ?? 0}px;
  height: 21px;
  flex: none;
  display: flex;
  align-items: center;
  gap: 3px;
  padding: 0 2px 0 3px;
  background: #fff;
  color: #222;
  font-size: 12px;
`;

const ComboText = styled.span<{ $ml?: number }>`
  flex: 1;
  margin-left: ${p => p.$ml ?? 0}px;
  white-space: nowrap;
`;

const ComboGap = styled.div<{ $w?: number }>`
  width: ${p => p.$w ?? 6}px;
  flex: none;
  display: flex;
  justify-content: center;
  &::after { content: ''; width: 1px; height: 100%; background: #d8dbdf; }
`;

const LineSample = styled.div<{ $w: number }>`
  width: ${p => p.$w}px;
  height: 1.5px;
  flex: none;
  background: #555;
`;

const Swatch = styled.div`
  width: 13px;
  height: 13px;
  flex: none;
  background: #fff;
  border: 1px solid #222;
`;

const Main = styled.div`
  flex: 1;
  min-height: 0;
  display: flex;
`;

const SideBar = styled.div<{ $w: number; $pr: number }>`
  width: ${p => p.$w}px;
  flex: none;
  padding: 2px ${p => p.$pr}px 0 2px;
  background: #3b4453;
`;

const SideGroup = styled.div`
  display: flex;
  flex-direction: column;
  align-items: center;
  border: 1px solid #2c3340;
  background: #343d4b;
`;

const SideHandle = styled.div`
  width: 14px;
  height: 7px;
  flex: none;
  background: repeating-linear-gradient(90deg, #8a919b 0 1px, transparent 1px 2px);
  background-size: 100% 3px;
  background-repeat: no-repeat;
  background-position: 0 2px;
`;

const SideBtn = styled.div`
  width: 100%;
  height: 21.45px;
  flex: none;
  display: flex;
  align-items: center;
  justify-content: center;
`;

const Viewport = styled.div`
  position: relative;
  flex: 1;
  background: #000;
  overflow: hidden;
`;

const Canvas = styled.svg`
  display: block;
  width: 100%;
  height: 100%;
`;

const History = styled.div`
  position: absolute;
  left: 298px;
  top: 1092px;
  display: flex;
  flex-direction: column;
  align-items: flex-start;
  gap: 5px;
`;

const HistoryLine = styled.div`
  height: 15px;
  padding: 0 1px;
  background: #4a4a4a;
  color: #b9b9b9;
  line-height: 15px;
  white-space: pre;
  font: 12px/15px "Liberation Mono", "Noto Sans CJK SC", monospace;
  border-radius: 2px;
`;

const CommandBar = styled.div`
  position: absolute;
  left: 237px;
  top: 1148px;
  width: 1058px;
  height: 26px;
  display: flex;
  align-items: stretch;
  background: #2a303b;
  border-radius: 3px 3px 0 0;
`;

const CommandTools = styled.div`
  width: 55px;
  display: flex;
  align-items: center;
  gap: 7px;
  padding-left: 3px;
  color: #c5c9ce;
`;

const CommandInput = styled.div`
  flex: 1;
  display: flex;
  align-items: center;
  gap: 2px;
  padding-left: 2px;
  background: #b1b1b1;
  border-top: 1px solid #8d8d8d;
  color: #6e6e6e;
  font-size: 13px;
  font-style: italic;
`;

const CommandEnd = styled.div`
  margin-left: auto;
  margin-right: 3px;
  border: 4px solid transparent;
  border-bottom: 5px solid #555;
  border-top: 0;
`;

const Status = styled.div`
  height: 29px;
  flex: none;
  display: flex;
  align-items: center;
  padding: 0 6px 0 20px;
  background: #232a36;
  border-top: 1px solid #14181f;
`;

const LayoutTab = styled.div<{ $active?: boolean }>`
  width: ${p => (p.$active ? 34 : 38)}px;
  height: 22px;
  margin-right: ${p => (p.$active ? 12 : 8)}px;
  margin-top: -8px;
  display: flex;
  align-items: center;
  justify-content: center;
  background: ${p => (p.$active ? '#3b4453' : '#2b3340')};
  color: ${p => (p.$active ? '#fff' : '#a6acb4')};
  border-radius: 0 0 8px 8px;
`;

const LayoutAdd = styled.div`
  margin: -8px 0 0 9px;
  color: #a6acb4;
  font-size: 15px;
`;

const StatusRight = styled.div`
  margin-left: auto;
  display: flex;
  align-items: center;
  gap: 2px;
`;

const StatusGroup = styled.div`
  height: 23px;
  display: flex;
  align-items: center;
  background: #3b4453;
`;

const Coords = styled(StatusGroup)`
  width: 176px;
  justify-content: flex-end;
  padding-right: 8px;
  color: #d4d7db;
  font: 12px "Liberation Sans", sans-serif;
  letter-spacing: -.3px;
`;

const StatusBtn = styled.div<{ $active?: boolean }>`
  width: 24px;
  height: 100%;
  flex: none;
  display: flex;
  align-items: center;
  justify-content: center;
  background: ${p => (p.$active ? '#5a93c8' : 'transparent')};
`;

const StatusText = styled.span<{ $w: number }>`
  width: ${p => p.$w}px;
  flex: none;
  padding-left: 4px;
  color: #d4d7db;
  font: 12px "Liberation Sans", "Noto Sans CJK SC", sans-serif;
  letter-spacing: -.3px;
  white-space: nowrap;
`;

const Watermark = styled.div<{ $x: number; $y: number }>`
  position: absolute;
  left: ${p => p.$x - 2}px;
  top: ${p => p.$y - 3}px;
  transform: translate(-50%, -50%) rotate(-45deg);
  white-space: nowrap;
  font: 700 33px "Noto Sans", "Noto Sans CJK SC", sans-serif;
  color: rgba(255, 255, 255, .12);
  pointer-events: none;
`;

const Brand = styled.div`
  position: absolute;
  left: 1405px;
  top: 1193px;
  font: 500 62px "Noto Sans CJK SC", sans-serif;
  line-height: 72px;
  color: #bdbdbd;
  letter-spacing: 1px;
  pointer-events: none;
`;

const BrandId = styled.div`
  position: absolute;
  left: 1358px;
  top: 1275px;
  font: 400 32.3px "Liberation Sans", sans-serif;
  color: #fff;
  text-shadow: 0 0 1px #fff;
  white-space: nowrap;
  pointer-events: none;
`;

const Icon = styled.svg<{ $s: number }>`
  display: block;
  width: ${p => p.$s}px;
  height: ${p => p.$s}px;
  flex: none;
`;

const Glyph = ({ n, s: size = 17 }: { n: string; s?: number }) => (
  <Icon $s={size} viewBox="0 0 18 18">{glyphs[n]}</Icon>
);

// ":" handle, ";" wide handle, "|" divider, "v" caret, the rest are icons
const Strip = ({ items, gap = 5.6 }: { items: string; gap?: number }) => (
  <>
    {items.split(' ').map((t, i) => {
      if (t === ':') return <Handle key={i} />;
      if (t === ';') return <Handle key={i} $wide />;
      if (t === '|') return <Divider key={i} $w={gap} />;
      if (t === 'v') return <Caret key={i} />;
      return <ToolBtn key={i}><Glyph n={t} /></ToolBtn>;
    })}
  </>
);

// "*x" active, "v" caret, "#w:text" fixed width text
const StatusItems = ({ items }: { items: string[] }) => (
  <StatusGroup>
    {items.map((t, i) => {
      if (t === 'v') return <Caret key={i} $w={14.5} />;
      if (t[0] === '#') {
        const [w, label] = t.slice(1).split(':_');
        return <StatusText key={i} $w={Number(w)}>{label}</StatusText>;
      }
      const on = t[0] === '*';
      return <StatusBtn key={i} $active={on}><Glyph n={on ? t.slice(1) : t} s={16} /></StatusBtn>;
    })}
  </StatusGroup>
);

const Chevron = () => <ChevronDown size={13} color="#8a8a8a" />;

const menus = ['文件(F)', '编辑(E)', '视图(V)', '插入(I)', '格式(O)', '工具(T)', '绘图(D)', '标注(N)', '修改(M)', '参数(P)', '窗口(W)', '帮助(H)', 'Express'];
const tabs = ['小拱', '大拱*', '钢结构拱门*', '石头*'];
const leftTools = ['line', 'xline', 'pline', 'polygon', 'rect', 'arc', 'circle', 'cloud', 'spline', 'ellipse', 'earc', 'insert', 'block', 'points', 'hatch', 'grad', 'region', 'table', 'textA', 'addsel'];
const rightTools = ['erase', 'copyobj', 'mirror', 'offset', 'array', 'move', 'rotate', 'scale', 'stretch', 'trim', 'extend', 'brkp', 'brk', 'join', 'chamfer', 'fillet', 'blend', 'explode'];
const statusGroups = [
  ['grid', 'snap', 'v'],
  ['tile'],
  ['*infer'],
  ['ortho', 'polar', 'v', 'isnap', 'v', 'ang', '*dyn', 'v'],
  ['lw', '*trans', 'selc', 'box3d', 'v'],
  ['*ucs', 'gizmo', 'v', '*threeD', 'v'],
  ['*annoV', 'annoA', 'annoS', '#58:_1:1 / 100%', 'v'],
  ['gear', 'v'],
  ['plus'],
  ['ruler', '#56:_小数', 'v'],
  ['calcS'],
  ['lockw', 'v'],
  ['isol', '*hw', 'qprop', 'warn'],
  ['full', 'menu'],
];
const marks = [[150, 248], [692, 245], [1243, 245], [0, 609], [548, 609], [1097, 609], [1645, 609], [398, 972], [949, 972], [1500, 972]];

const App = () => (
  <Window>
    <GlobalStyle />
    <TitleBar>
      <Qat>
        <Glyph n="logo" s={16} />
        <Caret $w={14} />
        <Space $w={10} />
        <Strip items="page folder save saveas publish mobile print undo v redo2 v" />
        <QatBtn $w={18}><Glyph n="menu" s={10} /></QatBtn>
        <QatBtn $w={20}><Glyph n="send" s={16} /></QatBtn>
        <QatLabel>共享</QatLabel>
      </Qat>
      <TitleText><span>Autodesk AutoCAD 2022</span><span>大拱.dwg</span></TitleText>
      <TitleTools>
        <Caret $w={10} />
        <SearchBox>键入关键字或短语</SearchBox>
        <Search size={15} color="#cfd3d8" />
        <Space $w={8} />
        <Glyph n="user" s={16} />
        <UserName>1505999135...</UserName>
        <Caret $w={10} />
        <Space $w={12} />
        <Glyph n="cart" s={15} />
        <Space $w={4} />
        <Glyph n="a360" s={17} />
        <Caret $w={10} />
        <TitleSep />
        <Glyph n="help" s={17} />
        <Caret $w={14} />
        <Space $w={60} />
        <WinBtn><Glyph n="min" s={15} /></WinBtn>
        <WinBtn><Glyph n="max" s={15} /></WinBtn>
        <WinBtn><Glyph n="close" s={15} /></WinBtn>
      </TitleTools>
    </TitleBar>
    <MenuBar>
      {menus.map(m => <MenuItem key={m}>{m}</MenuItem>)}
      <MenuTools>
        <MdiBtn><Glyph n="min" s={13} /></MdiBtn>
        <MdiBtn><Glyph n="restore" s={13} /></MdiBtn>
        <MdiBtn><Glyph n="close" s={13} /></MdiBtn>
      </MenuTools>
    </MenuBar>
    <TabBar>
      <Tab>开始</Tab>
      {tabs.map(t => (
        <Tab key={t} $active={t === '大拱*'}>{t}<X size={12} color="#aeb3ba" strokeWidth={3} /></Tab>
      ))}
      <AddTab>+</AddTab>
    </TabBar>
    <Toolbars>
      <Row>
        <Group><Strip gap={6.2} items=": page folder save | print preview plot globe | cut copy paste match edit | undo v redo v | hand zoomr zoomw zoomp | props design palette sheet markup calc | help" /></Group>
        <Group $ml={2}>
          <Strip items=": layerbox" />
          <Combo $w={292}>
            <Glyph n="bulb" s={15} /><Glyph n="sun" s={16} /><Glyph n="frame" s={16} /><Glyph n="lock" s={16} />
            <Swatch />
            <ComboText $ml={1}>VPORTS</ComboText>
            <Chevron />
          </Combo>
          <Strip items="layer1 layer2 layerbox :" />
        </Group>
        <Combo $w={146} $ml={2}><Swatch /><ComboText>ByLayer</ComboText><Chevron /></Combo>
        <ComboGap />
        <Combo $w={155}><LineSample $w={59} /><ComboText $ml={2}>ByLayer</ComboText><Chevron /></Combo>
        <ComboGap />
        <Combo $w={122}><LineSample $w={34} /><ComboText $ml={4}>0.00 mm</ComboText><Chevron /></Combo>
        <ComboGap />
        <Combo $w={116}><ComboText $ml={7}>ByLayer</ComboText><Chevron /></Combo>
      </Row>
      <Row>
        <Group><Strip items=": note book stack" /></Group>
        <Group>
          <Strip items="; dlin dali darc dord | drad djog ddia dang | dfast dbase dcont dspace dbreak | dtol dcen dinsp dwave | dedit dtext dupd |" />
          <Combo $w={117}><ComboText $ml={16}>Standard</ComboText><Chevron /></Combo>
          <Strip items="dstyle" />
        </Group>
        <Group><Strip items="; union subtr inter | extr movef offf delf rotf taper copyf colorf | shell clean sep3 colorf | addf brush slice boxv checkb" /></Group>
      </Row>
    </Toolbars>
    <Main>
      <SideBar $w={30} $pr={4}>
        <SideGroup>
          <SideHandle />
          {leftTools.map(t => <SideBtn key={t}><Glyph n={t} /></SideBtn>)}
        </SideGroup>
      </SideBar>
      <Viewport>
        <Canvas viewBox="32 128 1534 1174">
          <line x1="32" y1="362" x2="1566" y2="1250" stroke="#4a80b8" strokeWidth="1" />
          <line x1="1357" y1="128" x2="1357" y2="1302" stroke="#6f9f45" strokeWidth="1" />
          <line x1="1566" y1="1012" x2="1085" y2="1302" stroke="#b3785a" strokeWidth="1" />
          <Arch />
          <rect x="1351.5" y="1124.5" width="12" height="12" fill="#000" stroke="#fff" strokeWidth="1.2" />
          <ViewCube />
          <g stroke="#bdbdbd" strokeWidth="1.2" fill="none">
            <path d="M56 1217v40l34-19M56 1257l34 21" />
          </g>
          <g fill="#d0d0d0" fontFamily="Liberation Sans" fontSize="18">
            <text x="57" y="1213">Y</text>
            <text x="93" y="1236">X</text>
            <text x="93" y="1276">Z</text>
          </g>
        </Canvas>
        <History>
          <HistoryLine>命令: '_.zoom</HistoryLine>
          <HistoryLine>指定窗口的角点, 输入比例因子 (nX 或 nXP), 或者</HistoryLine>
          <HistoryLine>[全部(A)/中心(C)/动态(D)/范围(E)/上一个(P)/比例(S)/窗口(W)/对象(O)] &lt;实时&gt;: _e</HistoryLine>
        </History>
        <CommandBar>
          <CommandTools>
            <Handle />
            <X size={12} color="#c5c9ce" />
            <Glyph n="wrench" s={15} />
          </CommandTools>
          <CommandInput>
            <Glyph n="cmd" s={16} />
            <Caret $w={9} $c="#444" />
            <span>键入命令</span>
            <CommandEnd />
          </CommandInput>
        </CommandBar>
      </Viewport>
      <SideBar $w={32} $pr={6}>
        <SideGroup>
          <SideHandle />
          {rightTools.map(t => <SideBtn key={t}><Glyph n={t} /></SideBtn>)}
        </SideGroup>
      </SideBar>
    </Main>
    <Status>
      <LayoutTab $active>模型</LayoutTab>
      <LayoutTab>布局1</LayoutTab>
      <LayoutAdd>+</LayoutAdd>
      <StatusRight>
        <Coords>-160301.11, 13222.40, 0.00</Coords>
        <StatusItems items={['#27:_模型']} />
        {statusGroups.map((g, i) => <StatusItems key={i} items={g} />)}
      </StatusRight>
    </Status>
    {marks.map(m => <Watermark key={m.join()} $x={m[0]} $y={m[1]}>知末网 www.znzmo.com</Watermark>)}
    <Brand>知末</Brand>
    <BrandId>ID: 1179177140</BrandId>
  </Window>
);

export default App;
